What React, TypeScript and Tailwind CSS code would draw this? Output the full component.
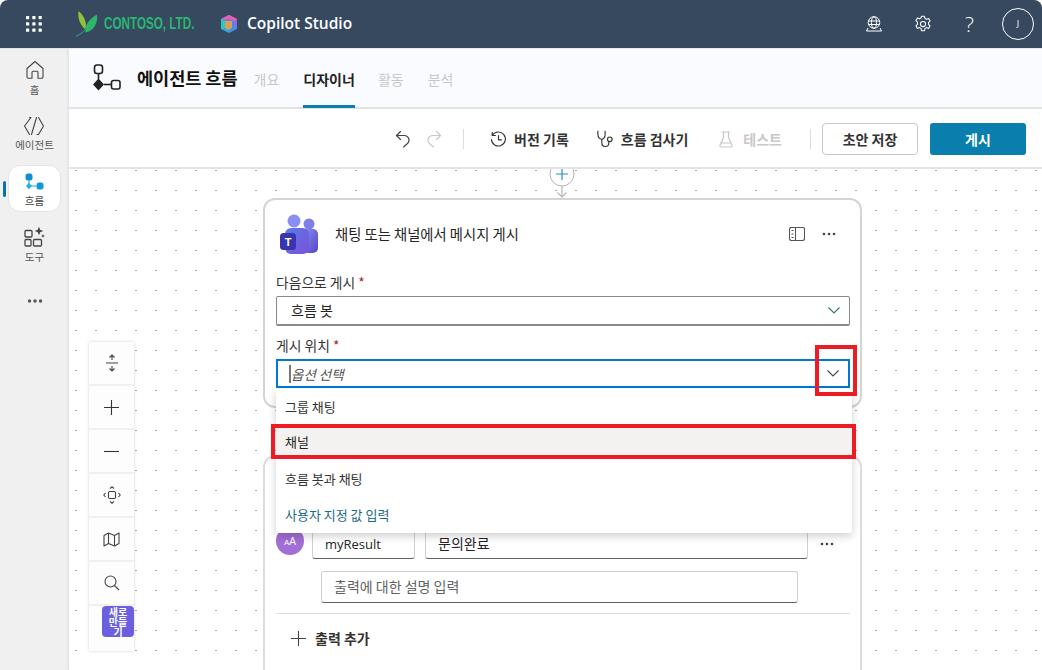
import React from "react";

const Ko = "[font-family:'Noto_Sans_CJK_KR','Noto_Sans',sans-serif]";

function Chevron({ color = "#2f7d4f" }: { color?: string }) {
  return (
    <svg width="14" height="9" viewBox="0 0 14 9" fill="none" stroke={color} strokeWidth="1.1">
      <path d="M1.500 1.500 7 7l5.500-5.500" />
    </svg>
  );
}

function Waffle() {
  const dots = [];
  for (let y = 0; y < 3; y++) for (let x = 0; x < 3; x++) dots.push(<rect key={`${x}${y}`} x={x * 6.3} y={y * 6.3} width="3.2" height="3.2" rx="0.6" fill="#fff" />);
  return <svg width="16" height="16" viewBox="0 0 16 16">{dots}</svg>;
}

function Leaf() {
  return (
    <svg width="22" height="26" viewBox="0 0 22 26">
      <path d="M2.500 0C1.500 7 4 14 9.500 18.500 11 12 8.500 5 2.500 0z" fill="#8fc33a" />
      <path d="M21 3.500C22 12 18 20 9.500 21.500 8 14 14 7.500 21 3.500z" fill="#2fb36f" />
      <path d="M0 25.500C5 23 10 19 14 13" stroke="#2fb36f" strokeWidth="1" fill="none" />
    </svg>
  );
}

function CopilotLogo() {
  return (
    <svg width="18" height="20" viewBox="0 0 18 20">
      <defs>
        <linearGradient id="cp1" x1="0" y1="1" x2="1" y2="0">
          <stop offset="0" stopColor="#1cc4d8" />
          <stop offset="0.5" stopColor="#3f8cf0" />
          <stop offset="1" stopColor="#c04fe0" />
        </linearGradient>
      </defs>
      <path d="M9 1l8 4v10l-8 4-8-4V5z" fill="url(#cp1)" />
      <path d="M9 1l8 4-3 2-5-2-4 1-4-1z" fill="#e85fb0" />
      <path d="M5 7h7v7l-4 2-3-2z" fill="#f5a13a" opacity="0.85" />
      <path d="M1 5l4 2v7l-4 1z" fill="#2cc8c8" />
    </svg>
  );
}

function GlobeIcon() {
  return (
    <svg width="18" height="18" viewBox="0 0 18 18" fill="none" stroke="#fff" strokeWidth="1">
      <circle cx="9" cy="7.500" r="5.800" />
      <ellipse cx="9" cy="7.500" rx="2.600" ry="5.800" />
      <path d="M3.300 6h11.400M3.500 9.500h11M3 13l-1.500 3h15L15 13" />
    </svg>
  );
}

function GearIcon() {
  return (
    <svg width="18" height="18" viewBox="0 0 18 18" fill="none" stroke="#fff" strokeWidth="1.05">
      <path d="M7.500 1.300h3l.5 2.200 1.500.8 2.100-.8 1.500 2.600-1.600 1.500v1.700l1.600 1.500-1.500 2.600-2.100-.8-1.500.8-.5 2.300h-3l-.5-2.300-1.500-.8-2.100.8-1.500-2.600 1.600-1.500V7.100L1.900 5.600l1.500-2.600 2.100.8 1.500-.8z" strokeLinejoin="round" />
      <circle cx="9" cy="9" r="2.600" />
    </svg>
  );
}

function HomeIcon() {
  return (
    <svg width="20" height="20" viewBox="0 0 20 20" fill="none" stroke="#444" strokeWidth="1.1">
      <path d="M2 8.500 10 1.500l8 7V17a1.200 1.200 0 0 1-1.200 1.200H13V12.500a1.200 1.200 0 0 0-1.200-1.200H8.200A1.200 1.200 0 0 0 7 12.500v5.700H3.200A1.200 1.200 0 0 1 2 17z" strokeLinejoin="round" />
    </svg>
  );
}

function AgentIcon() {
  return (
    <svg width="22" height="20" viewBox="0 0 22 20" fill="none" stroke="#444" strokeWidth="1.1">
      <path d="M6.500 1.500h1.500L1.500 10 6.500 18.500M15.500 1.500 20.500 10 15.500 18.500h-1.500M13.500 1.500 8.500 18.500" strokeLinecap="round" strokeLinejoin="round" />
    </svg>
  );
}

function FlowNavIcon() {
  return (
    <svg width="20" height="20" viewBox="0 0 20 20">
      <rect x="0.500" y="0.500" width="7" height="7" rx="2.500" fill="#0f8fd0" />
      <path d="M4 7v5.500M4 13h7" stroke="#16a5e0" strokeWidth="1" />
      <path d="M4 9.800 6.800 13 4 16.200 1 13z" fill="#17b4e8" />
      <rect x="11.500" y="9.500" width="7" height="7" rx="2.500" fill="#0f9ad4" />
    </svg>
  );
}

function ToolsIcon() {
  return (
    <svg width="22" height="22" viewBox="0 0 22 22" fill="none" stroke="#444" strokeWidth="1.3">
      <rect x="1" y="4.500" width="7" height="6.500" rx="1" />
      <rect x="1" y="13.500" width="6" height="6.500" rx="1" />
      <rect x="9.500" y="13.500" width="8" height="6.500" rx="1" />
      <path d="M15 .8l1.200 3 3 1.200-3 1.200-1.200 3-1.200-3-3-1.200 3-1.200z" fill="#444" stroke="none" />
      <path d="M19 8l.6 1.400 1.400.6-1.400.6-.6 1.400-.6-1.400-1.400-.6 1.400-.6z" fill="#444" stroke="none" />
    </svg>
  );
}

function FlowTitleIcon() {
  return (
    <svg width="30" height="30" viewBox="0 0 30 30" fill="none" stroke="#222" strokeWidth="1.6">
      <rect x="2.500" y="1" width="8" height="8.500" rx="2.500" />
      <path d="M6.500 9.500v6" />
      <path d="M6.500 14.500l5.500 6-5.500 6-5.500-6z" fill="#222" stroke="none" />
      <path d="M12 20.500h7" />
      <rect x="19.500" y="16.500" width="8.500" height="8.500" rx="2" />
    </svg>
  );
}

function Undo({ color }: { color: string }) {
  return (
    <svg width="16" height="18" viewBox="0 0 16 18" fill="none" stroke={color} strokeWidth="1.15">
      <path d="M5.500 1.500 1.500 5.500l4 4M1.500 5.500h8a4.600 4.600 0 0 1 3 8l-4 3.500" strokeLinecap="round" strokeLinejoin="round" />
    </svg>
  );
}

function HistoryIcon() {
  return (
    <svg width="17" height="17" viewBox="0 0 17 17" fill="none" stroke="#333" strokeWidth="1.15">
      <path d="M2.500 4.200A7 7 0 1 1 1.400 8.500" strokeLinecap="round" />
      <path d="M2.200 1.300v3.200h3.200M8.500 4.500v4.300h3" strokeLinecap="round" strokeLinejoin="round" />
    </svg>
  );
}

function StethIcon() {
  return (
    <svg width="17" height="18" viewBox="0 0 17 18" fill="none" stroke="#333" strokeWidth="1.15">
      <path d="M1 1.200c-.4 3 0 6 1.500 7.200 1.500 1.200 3.300 1 4.500-.2C8.200 7 8.300 4 8 1.200M4.800 9.300v3.200c0 2.400 1.700 4 3.700 4s3.300-1.500 3.300-3.500v-1.200" strokeLinecap="round" />
      <circle cx="12.800" cy="9.300" r="2.300" />
    </svg>
  );
}

function FlaskIcon() {
  return (
    <svg width="14" height="17" viewBox="0 0 14 17" fill="none" stroke="#c8c8c8" strokeWidth="1.2">
      <path d="M3 1h8M4.500 1v5.500L1 14.200c-.4 1 .2 1.800 1.200 1.800h9.600c1 0 1.600-.8 1.200-1.800L9.500 6.500V1M3 12h8" strokeLinecap="round" strokeLinejoin="round" />
    </svg>
  );
}

function TeamsIcon() {
  return (
    <svg width="40" height="42" viewBox="0 0 40 42">
      <defs>
        <linearGradient id="tm1" x1="0" y1="0" x2="1" y2="1">
          <stop offset="0" stopColor="#8f8cf5" />
          <stop offset="1" stopColor="#4f46c8" />
        </linearGradient>
        <linearGradient id="tm2" x1="0" y1="0" x2="1" y2="1">
          <stop offset="0" stopColor="#5a7be8" />
          <stop offset="1" stopColor="#7a52d8" />
        </linearGradient>
      </defs>
      <circle cx="15" cy="8" r="6.500" fill="#8a8ef5" />
      <circle cx="30" cy="11" r="5.500" fill="#7f7fe8" />
      <rect x="24" y="16" width="15" height="24" rx="5" fill="url(#tm1)" />
      <rect x="6" y="15" width="24" height="26" rx="6" fill="url(#tm2)" />
      <rect x="1" y="20" width="16" height="17" rx="3.500" fill="#3a33b0" />
      <text x="9" y="33" textAnchor="middle" fontSize="11" fontWeight="700" fill="#fff" fontFamily="Liberation Sans">T</text>
    </svg>
  );
}

function RailBtn({ children }: { children: React.ReactNode }) {
  return <div className="h-[44px] flex items-center justify-center border-b-2 border-[#f0f0f0]">{children}</div>;
}

function Canvas() {
  return (
    <div className="flex-1 relative overflow-hidden bg-white bg-[radial-gradient(1.2px_0.7px_at_7px_1.5px,#a8a8a8_99%,transparent_100%)] bg-[size:20px_20px]">
      {/* connector */}
      <svg className="absolute left-[480px] top-0" width="26" height="30" viewBox="0 0 26 30" fill="none">
        <circle cx="13" cy="5" r="12" fill="#fff" stroke="#b4b4b4" strokeWidth="1" />
        <path d="M13 -1v12M7 5h12" stroke="#2b93b8" strokeWidth="1.200" />
        <path d="M13 17v11M8.500 23.500l4.500 4.500 4.500-4.500" stroke="#bdbdbd" strokeWidth="1.400" />
      </svg>

      {/* zoom rail */}
      <div className="absolute left-[20px] top-[173px] w-[45px] h-[309px] bg-[#fdfdfd] shadow-[0_0_3px_rgba(0,0,0,0.18)] flex flex-col">
        <RailBtn>
          <svg width="14" height="18" viewBox="0 0 14 18" fill="none" stroke="#444" strokeWidth="1.100">
            <path d="M7 1v5M4.500 3.500 7 1l2.500 2.500M1 9h12M7 17v-5M4.500 14.500 7 17l2.500-2.500" />
          </svg>
        </RailBtn>
        <RailBtn>
          <svg width="15" height="15" viewBox="0 0 15 15" stroke="#333" strokeWidth="1.100"><path d="M7.500 0v15M0 7.500h15" /></svg>
        </RailBtn>
        <RailBtn>
          <svg width="15" height="3" viewBox="0 0 15 3" stroke="#333" strokeWidth="1.100"><path d="M0 1.500h15" /></svg>
        </RailBtn>
        <RailBtn>
          <svg width="18" height="18" viewBox="0 0 18 18" fill="none" stroke="#444" strokeWidth="1.100">
            <rect x="5.500" y="5.500" width="7" height="7" rx="1.200" />
            <path d="M7 2.500 9 .8l2 1.700M7 15.500l2 1.700 2-1.700M2.500 7 .8 9l1.700 2M15.500 7l1.700 2-1.700 2" />
          </svg>
        </RailBtn>
        <RailBtn>
          <svg width="17" height="15" viewBox="0 0 17 15" fill="none" stroke="#444" strokeWidth="1.100">
            <path d="M1 3.500 5.500 1l6 2.500L16 1v10.500L11.500 14l-6-2.500L1 14zM5.500 1v10.500M11.500 3.500V14" strokeLinejoin="round" />
          </svg>
        </RailBtn>
        <RailBtn>
          <svg width="16" height="16" viewBox="0 0 16 16" fill="none" stroke="#444" strokeWidth="1.100">
            <circle cx="6.500" cy="6.500" r="5.500" /><path d="M10.500 10.500 15 15" />
          </svg>
        </RailBtn>
        <div className="flex-1 flex justify-end items-start">
          <div className={`w-[32px] h-[31px] rounded-[4px] bg-[#6b5fe0] text-white text-[10px] leading-[10px] font-bold text-center flex items-center justify-center ${Ko}`}>새로<br />만들<br />기</div>
        </div>
      </div>

      {/* card 1 */}
      <div className={`absolute left-[194px] top-[29px] w-[599px] h-[210px] rounded-[12px] bg-white border-2 border-[#d4d4d4] px-[11px] ${Ko}`}>
        <div className="flex items-center h-[68px]">
          <div className="w-[40px] ml-[3px] mr-[16px]"><TeamsIcon /></div>
          <span className="text-[14.300px] leading-[18px] text-[#242424]">채팅 또는 채널에서 메시지 게시</span>
          <div className="ml-auto flex items-center gap-[17px] pr-[13px]">
            <svg width="16" height="14" viewBox="0 0 16 14" fill="none" stroke="#555" strokeWidth="1.100">
              <rect x="0.500" y="0.500" width="15" height="13" rx="2" /><path d="M6.500 .5v13M2.500 3.500h2M2.500 7h2M2.500 10.500h2" />
            </svg>
            <svg width="14" height="4" viewBox="0 0 14 4" fill="#444"><circle cx="2" cy="2" r="1.300" /><circle cx="7" cy="2" r="1.300" /><circle cx="12" cy="2" r="1.300" /></svg>
          </div>
        </div>
        <div className="text-[13.800px] leading-[18px] text-[#333] mt-[5px]">다음으로 게시 <span className="text-[#a4262c]">*</span></div>
        <div className="mt-[5px] h-[30px] w-[574px] rounded-[2px] border border-[#8a8a8a] border-b-2 flex items-center pl-[14px] pr-[8px] justify-between text-[14px] text-[#242424]">
          흐름 봇<Chevron />
        </div>
        <div className="text-[13.800px] leading-[18px] text-[#333] mt-[10px]">게시 위치 <span className="text-[#a4262c]">*</span></div>
        <div className="mt-[5px] h-[29px] w-[574px] border-2 border-[#0078d4] flex items-center pl-[11px] pr-[8px] justify-between text-[13.500px] italic text-[#555]">
          <span className="border-l-2 border-[#777] leading-[18px]">옵션 선택</span><Chevron color="#444" />
        </div>
      </div>

      {/* card 2 */}
      <div className={`absolute left-[194px] top-[286px] w-[599px] h-[240px] rounded-[12px] bg-white border-2 border-[#dcdcdc] px-[11px] pt-[73px] ${Ko}`}>
        <div className="flex items-start">
          <div className="w-[28px] h-[28px] rounded-full bg-[#a26fd6] text-white text-[10px] flex items-center justify-center mr-[8px] -mt-[3px] [font-family:'Liberation_Sans']">
            <span><span className="text-[8px]">A</span>A</span>
          </div>
          <div className="w-[103px] h-[29px] rounded-[3px] border border-[#d0d0d0] border-b-[#616161] flex items-center pl-[12px] text-[13px] text-[#242424] [font-family:'Open_Sans',sans-serif] mr-[10px]">myResult</div>
          <div className="w-[383px] h-[29px] rounded-[3px] border border-[#d0d0d0] border-b-[#616161] flex items-center pl-[12px] pb-[2px] text-[14px] text-[#242424]">문의완료</div>
          <svg className="ml-[12px] mt-[12px]" width="14" height="4" viewBox="0 0 14 4" fill="#444"><circle cx="2" cy="2" r="1.300" /><circle cx="7" cy="2" r="1.300" /><circle cx="12" cy="2" r="1.300" /></svg>
        </div>
        <div className="ml-[45px] mt-[12px] w-[477px] h-[32px] rounded-[3px] border border-[#d0d0d0] border-b-[#616161] flex items-center pl-[12px] pb-[2px] text-[14px] text-[#616161]">출력에 대한 설명 입력</div>
        <div className="mt-[10px] w-[574px] h-px bg-[#dedede]" />
        <div className="mt-[15px] ml-[15px] flex items-center gap-[9px]">
          <svg width="15" height="15" viewBox="0 0 15 15" stroke="#444" strokeWidth="1.100"><path d="M7.500 0v15M0 7.500h15" /></svg>
          <span className="text-[14px] font-bold text-[#333] leading-[18px]">출력 추가</span>
        </div>
      </div>

      {/* dropdown */}
      <div className={`absolute left-[207px] top-[220px] w-[576px] h-[144px] bg-white rounded-b-[2px] shadow-[0_3px_8px_rgba(0,0,0,0.2)] text-[13px] text-[#333] ${Ko}`}>
        <div className="h-[37px] flex items-center pl-[9px] pb-[2px]">그룹 채팅</div>
        <div className="h-[32px] flex items-center pl-[9px] pb-[1px] bg-[#f3f2f1] text-[#242424]">채널</div>
        <div className="h-[37px] flex items-center pl-[9px] pt-[4px]">흐름 봇과 채팅</div>
        <div className="h-[36px] flex items-center pl-[9px] pt-[4px] text-[#1b6a85]">사용자 지정 값 입력</div>
      </div>

      {/* annotation boxes */}
      <div className="absolute left-[202px] top-[255px] w-[585px] h-[35px] border-[4px] border-[#ed1c24]" />
      <div className="absolute left-[746px] top-[176px] w-[42px] h-[51px] border-[4px] border-[#ed1c24]" />
    </div>
  );
}

export default function App() {
  return (
    <div className={`w-[1042px] h-[670px] overflow-hidden flex flex-col bg-white ${Ko}`}>
      <header className="h-[48px] shrink-0 bg-[#36495e] rounded-t-[8px] flex items-center text-white">
        <div className="ml-[26px] w-[16px] flex"><Waffle /></div>
        <div className="ml-[34px] w-[22px] flex"><Leaf /></div>
        <div className="ml-[6px] w-[114px] text-[16px] font-bold text-[#2bb673] scale-x-[0.73] origin-left whitespace-nowrap [font-family:'Liberation_Sans',sans-serif]">CONTOSO, LTD.</div>
        <div className="ml-[2px] w-[18px] flex"><CopilotLogo /></div>
        <div className="ml-[9px] text-[15.500px] font-semibold [font-family:'Open_Sans',sans-serif]">Copilot Studio</div>
        <div className="ml-auto flex items-center">
          <GlobeIcon />
          <div className="ml-[31px]"><GearIcon /></div>
          <div className="ml-[33px] w-[10px] text-[21px] leading-none font-light [font-family:'Open_Sans',sans-serif]">?</div>
          <div className="ml-[27px] mr-[8px] w-[32px] h-[32px] rounded-full border border-white flex items-center justify-center text-[9px] [font-family:'Open_Sans',sans-serif]">J</div>
        </div>
      </header>
      <div className="flex-1 flex min-h-0">
        <nav className="relative w-[69px] shrink-0 bg-[#f0f0f0] border-t border-[#e4e4e4] shadow-[inset_-3px_0_3px_-2px_rgba(0,0,0,0.08)] flex flex-col items-center text-[10.500px] text-[#555] leading-[14px]">
          <div className="mt-[11px] flex flex-col items-center gap-[3px]"><HomeIcon /><span>홈</span></div>
          <div className="mt-[19px] flex flex-col items-center gap-[2px]"><AgentIcon /><span>에이전트</span></div>
          <div className="mt-[13px] w-[53px] h-[47px] rounded-[12px] bg-white border border-[#e4e4e4] flex flex-col items-center pt-[7px] text-[#444]"><FlowNavIcon /><span className="mt-[1px]">흐름</span></div>
          <div className="absolute left-[3px] top-[132px] w-[3px] h-[16px] rounded-[2px] bg-[#0b74b0]" />
          <div className="mt-[14px] flex flex-col items-center gap-[2px]"><ToolsIcon /><span>도구</span></div>
          <svg className="mt-[35px]" width="16" height="4" viewBox="0 0 16 4" fill="#555"><circle cx="2.500" cy="2" r="1.700" /><circle cx="8" cy="2" r="1.700" /><circle cx="13.500" cy="2" r="1.700" /></svg>
        </nav>
        <main className="flex-1 flex flex-col min-w-0">
          <div className="h-[61px] shrink-0 bg-[#fafbfe] border-t border-[#e8e8e8] border-b-2 border-b-[#e2e2e2] flex items-stretch">
            <div className="ml-[23px] mt-[15px]"><FlowTitleIcon /></div>
            <div className="ml-[15px] mt-[18px] text-[17.500px] font-semibold leading-[22px] text-[#111]">에이전트 흐름</div>
            <div className="ml-[16px] mt-[20px] text-[14px] leading-[20px] text-[#c8c8c8]">개요</div>
            <div className="ml-[24px] h-[59px] pt-[20px] border-b-[3px] border-[#0b7eab] text-[14px] font-semibold leading-[20px] text-[#222]">디자이너</div>
            <div className="ml-[23px] mt-[20px] text-[14px] leading-[20px] text-[#c8c8c8]">활동</div>
            <div className="ml-[24px] mt-[20px] text-[14px] leading-[20px] text-[#c8c8c8]">분석</div>
          </div>
          <div className="h-[60px] shrink-0 bg-white border-b-2 border-[#e4e4e4] flex items-center pt-[2px] pr-[16px] text-[14px] font-semibold text-[#333]">
            <div className="ml-auto flex"><Undo color="#444" /></div>
            <div className="ml-[15px] flex -scale-x-100"><Undo color="#c8c8c8" /></div>
            <div className="ml-[21px] w-px h-[20px] bg-[#dedede]" />
            <div className="ml-[26px] flex"><HistoryIcon /></div>
            <span className="ml-[7px]">버전 기록</span>
            <div className="ml-[28px] flex"><StethIcon /></div>
            <span className="ml-[7px]">흐름 검사기</span>
            <div className="ml-[31px] flex"><FlaskIcon /></div>
            <span className="ml-[10px] text-[#c8c8c8]">테스트</span>
            <div className="ml-[28px] w-px h-[20px] bg-[#dedede]" />
            <button className="ml-[11px] w-[96px] h-[32px] rounded-[4px] bg-white border border-[#c8c8c8] text-[#333] font-semibold">초안 저장</button>
            <button className="ml-[12px] w-[96px] h-[32px] rounded-[3px] bg-[#0a7fae] text-white font-semibold">게시</button>
          </div>
          <Canvas />
        </main>
      </div>
    </div>
  );
}
